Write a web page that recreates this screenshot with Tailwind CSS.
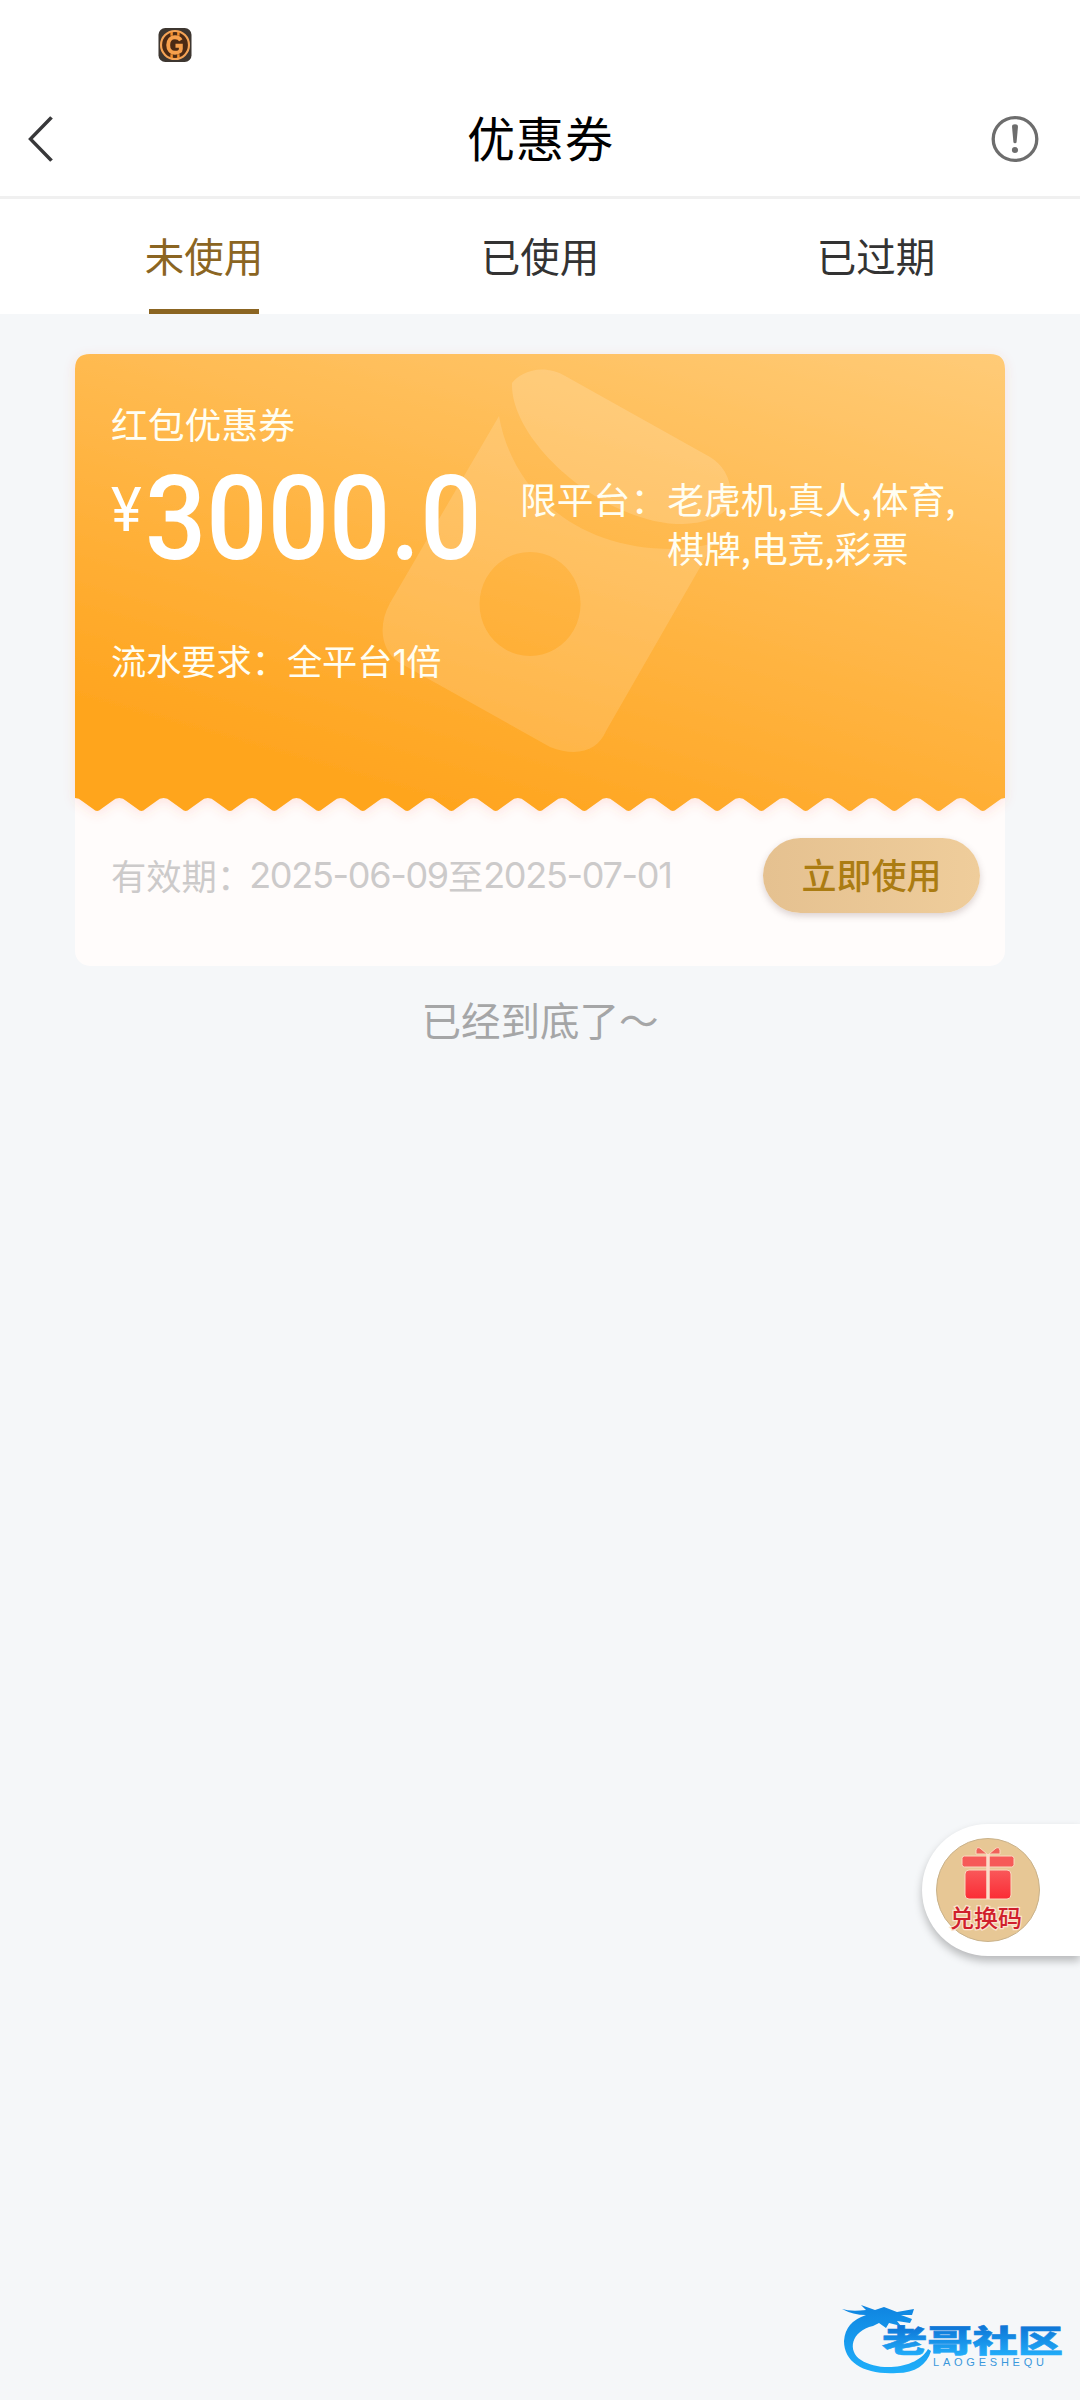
<!DOCTYPE html>
<html lang="zh-CN">
<head>
<meta charset="utf-8">
<title>优惠券</title>
<script src="https://cdn.jsdelivr.net/npm/@tailwindcss/browser@4"></script>
</head>
<body class="w-[1080px] h-[2400px] overflow-hidden relative bg-[#f5f7f9] font-['Noto_Sans_CJK_SC',sans-serif]">
  <!-- status bar -->
  <div class="h-[75px] bg-white pl-[158px] pt-[28px]">
    <svg width="34" height="34" viewBox="0 0 34 35">
      <rect width="34" height="35" rx="7" fill="#3d3630"/>
      <circle cx="17" cy="17.500" r="14.400" fill="#4b2a14" stroke="#f5a456" stroke-width="2.200"/>
      <path d="M13.500 4v4M20.500 4v4M13.500 27v4M20.500 27v4" stroke="#f5902e" stroke-width="2.500"/>
      <path d="M23 12.500C21.500 10 19.500 9.500 17 9.500c-4.500 0-7 3.500-7 8S12.500 25.500 17 25.500c3.500 0 6-1.500 6-4V18.300H17.500" fill="none" stroke="#f7a04c" stroke-width="4"/>
    </svg>
  </div>
  <!-- header -->
  <header class="h-[124px] bg-white border-b-[3px] border-[#f0f0f0] grid grid-cols-3 items-center pl-[28px] pr-[41px]">
    <svg class="mt-[7px]" width="48" height="46" viewBox="0 0 48 50" preserveAspectRatio="none"><path d="M23.500 1.500L2.500 25l21 23.500" fill="none" stroke="#38383a" stroke-width="3.600"/></svg>
    <h1 class="text-[48px] leading-[70px] tracking-[1px] text-black text-center pl-[14px]">优惠券</h1>
    <svg class="mt-[7px] justify-self-end" width="48" height="48" viewBox="0 0 48 50" preserveAspectRatio="none"><ellipse cx="24" cy="25" rx="21.800" ry="22.300" fill="none" stroke="#6d6d6d" stroke-width="3.300"/><path d="M21 12q0-2.400 3-2.400t3 2.400L25.600 28q-.2 1.500-1.600 1.500T22.400 28z" fill="#6d6d6d"/><circle cx="24" cy="36.500" r="3.100" fill="#6d6d6d"/></svg>
  </header>
  <!-- tabs -->
  <nav class="h-[115px] bg-white px-[36px] grid grid-cols-3 text-[39.500px] leading-[111px] text-[#333] text-center">
    <div class="text-[#8b6522] flex flex-col items-center"><span class="h-[110px]">未使用</span><i class="w-[110px] h-[5px] bg-[#8b6522]"></i></div>
    <div>已使用</div>
    <div>已过期</div>
  </nav>
  <!-- coupon -->
  <main class="pt-[40px] px-[75px]">
    <section class="h-[612px] rounded-[15px] bg-[#fffcfb] relative">
      <svg class="absolute -left-[20px] -top-[20px]" width="970" height="510" viewBox="-20 -20 970 510">
        <defs>
          <linearGradient id="g" gradientUnits="userSpaceOnUse" x1="380" y1="450" x2="540" y2="-110"><stop offset="0" stop-color="#ffa51f"/><stop offset="1" stop-color="#ffcb77"/></linearGradient>
          <filter id="s" x="-5%" y="-10%" width="110%" height="120%"><feDropShadow dx="0" dy="3" stdDeviation="6" flood-color="#ff5a3c" flood-opacity=".15"/></filter>
        </defs>
        <path id="ticket" fill="url(#g)" filter="url(#s)"/>
        <g transform="translate(-75 -354)" fill="#fff">
          <path fill-opacity=".14" fill-rule="evenodd" d="M499 416C512 490 575 550 675 549Q697 548 714 543L606 731C598 750 578 758 550 747L400 663C380 650 378 625 390 603ZM530 552a50.500 52 0 1 0 .1 0Z"/>
          <path fill-opacity=".16" d="M512 383C520 372 543 362 567 377L710 457C726 466 736 488 728 508C714 522 695 524 676 524C600 520 510 440 512 383Z"/>
        </g>
      </svg>
      <div class="relative h-[457px] text-[#fffef2]">
        <p class="pt-[44px] pl-[36px] text-[36.800px] leading-[50px]">红包优惠券</p>
        <div class="flex h-[133px] pl-[36px]">
          <div class="w-[409px] flex">
            <span class="w-[34px] pt-[28px] font-[Roboto] text-[62px] leading-[68px] text-white origin-left scale-x-[0.940]">¥</span>
            <span class="font-[Roboto] font-medium text-[116px] leading-[132px] pt-[5px] text-white origin-left scale-x-[0.930] whitespace-nowrap">3000.0</span>
          </div>
          <div class="flex text-[36.800px] leading-[49px] pt-[26px] whitespace-nowrap"><span>限平台：</span><span>老虎机,真人,体育,<br>棋牌,电竞,彩票</span></div>
        </div>
        <p class="pl-[36px] pt-[54px] text-[35.200px] leading-[50px]">流水要求：全平台<span class="font-[Inter] text-[36px] tracking-[-1px]">1</span>倍</p>
      </div>
      <div class="relative flex items-center justify-between pl-[36px] pr-[25px] mt-[27px] h-[75px]">
        <p class="text-[35.300px] text-[#cccaca] whitespace-nowrap flex items-center leading-[50px] -mt-[2px]">有效期：<span class="font-[Inter] text-[36px] tracking-[-1.300px] -ml-[3px]">2025-06-09</span>至<span class="font-[Inter] text-[36px] tracking-[-1.300px]">2025-07-01</span></p>
        <button class="w-[217px] h-[75px] rounded-full bg-linear-to-r from-[#e5c190] to-[#efcd9b] shadow-[0_3px_7px_rgba(90,60,60,0.22)] text-[#ab7c12] text-[35px] leading-[71px] pb-[4px] font-medium">立即使用</button>
      </div>
    </section>
    <p class="text-center text-[39.500px] leading-[58px] text-[#a5a6a7] mt-[24px]">已经到底了～</p>
  </main>
  <!-- redeem code -->
  <aside class="absolute left-[922px] top-[1824px] w-[158px] h-[132px] bg-white rounded-l-full shadow-[0_5px_8px_rgba(0,0,0,0.25)] p-[14px]">
    <svg width="104" height="104" viewBox="0 0 104 104">
      <circle cx="52" cy="52" r="51.500" fill="#e7c795" stroke="#c9b28b"/>
      <defs><linearGradient id="r" x1="0" y1="0" x2="0" y2="1"><stop offset="0" stop-color="#f9585a"/><stop offset="1" stop-color="#fb2c35"/></linearGradient></defs>
      <g stroke="#fbd9bf" stroke-width="1">
        <path d="M40 12q1-4 4-2l7 6H40zM64 12q-1-4-4-2l-7 6h11z" fill="#f0635a"/>
        <rect x="26" y="18" width="52" height="11" rx="2.500" fill="#f65a58"/>
        <path d="M29 36q0-4 4-4H71q4 0 4 4V57q0 4-4 4H33q-4 0-4-4z" fill="url(#r)"/>
      </g>
      <path d="M52 16V61" stroke="#fbdcc9" stroke-width="3.500"/>
      <text x="50" y="89" text-anchor="middle" class="font-['Noto_Sans_CJK_SC',sans-serif] font-medium text-[24px]" fill="#d01f2c" stroke="#fbe3cf" stroke-width="2.500" paint-order="stroke">兑换码</text>
    </svg>
  </aside>
  <!-- community logo -->
  <svg class="absolute left-[835px] top-[2295px]" width="240" height="90" viewBox="0 0 240 90">
    <defs><linearGradient id="b" gradientUnits="userSpaceOnUse" x1="0" y1="10" x2="0" y2="80"><stop offset="0" stop-color="#0f84e0"/><stop offset="1" stop-color="#1fb0fb"/></linearGradient>
    <linearGradient id="t" gradientUnits="userSpaceOnUse" x1="0" y1="-24" x2="0" y2="4"><stop offset="0" stop-color="#0f78d8"/><stop offset="1" stop-color="#22aefa"/></linearGradient></defs>
    <path fill="url(#b)" d="M7 14Q16 17 31 15L26 10L40 15L49 12L62 17L79 14L77 20L66 20L77 24L75 28L62 26L66 31L54 28L51 33L44 28L38 31C16 36 12 56 26 65C44 77 82 74 93 54L96 56C92 70 80 78 62 78C30 80 9 68 9 46Q10 27 31 20Q18 20 7 14Z"/>
    <text transform="translate(47 57) scale(1.460 1)" class="font-['Noto_Sans_CJK_SC',sans-serif] font-black text-[31px]" fill="url(#t)" stroke="url(#t)" stroke-width=".6">老哥社区</text>
    <text x="98" y="71" textLength="111" class="font-['Liberation_Sans',sans-serif] text-[11px]" fill="#3a98dc">LAOGESHEQU</text>
  </svg>
  <script>
    // scalloped lower edge: 21 rounded teeth across the 930px ticket
    const p = 930 / 21;
    let d = 'M0 444V15Q0 0 15 0H915Q930 0 930 15V444';
    for (let i = 20; i >= 0; i--) {
      const x = i * p, m = x + p / 2;
      d += `Q${x + p - 4} 444 ${x + p - 7} 447L${m + 4} 455Q${m} 459 ${m - 4} 455L${x + 7} 447Q${x + 4} 444 ${x} 444`;
    }
    document.getElementById('ticket').setAttribute('d', d + 'Z');
  </script>
</body>
</html>
